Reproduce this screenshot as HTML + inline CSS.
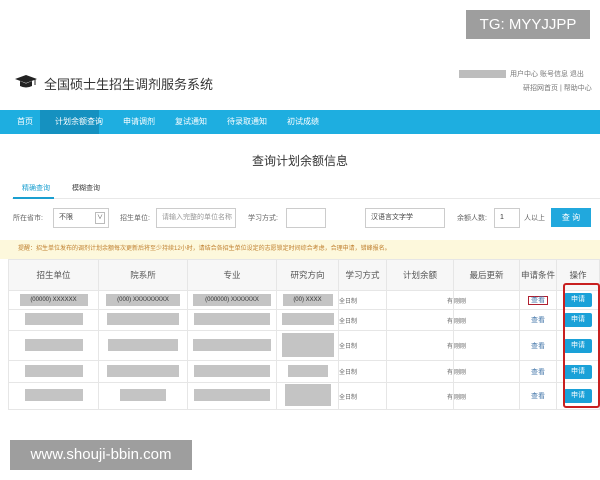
<!DOCTYPE html><html><head><meta charset="utf-8"><style>
*{margin:0;padding:0;box-sizing:border-box}
body{width:600px;height:480px;background:#fff;position:relative;overflow:hidden;font-family:"Liberation Sans","Noto Sans CJK SC",sans-serif;color:#555}
.a{position:absolute}
.g{position:absolute;background:#bdbdbd}
.nav span{position:absolute;top:0;height:24px;line-height:24px;color:#fff;font-size:8px}
.f{font-size:7px;color:#666;position:absolute}
.inp{position:absolute;border:1px solid #ccc;background:#fff;height:20px;font-size:7px;line-height:18px;padding-left:5px;color:#999}
table{position:absolute;left:8px;top:259px;width:592px;border-collapse:collapse;font-size:8px}
td{border:1px solid #e6e6e6;text-align:center;color:#666;position:relative}
th{border:1px solid #e6e6e6;font-weight:normal;color:#555;height:31px;background:#f7f7f7;font-size:8.5px}
.b{display:inline-block;background:#1aa1d8;color:#fff;font-size:7px;width:28px;height:14px;line-height:14px;border-radius:2px}
.k{color:#47a;font-size:7px}
.bar{display:inline-block;background:#c4c4c4;height:12px}
</style></head><body>
<div class="a" style="left:466px;top:10px;width:124px;height:29px;background:#9e9e9e;color:#fff;font-size:15px;line-height:29px;text-align:center">TG: MYYJJPP</div>
<svg class="a" style="left:15px;top:75px" width="22" height="14" viewBox="0 0 22 14"><path d="M0 4 L11 0 L22 4 L11 8 Z" fill="#222"/><path d="M5 6 L5 11 Q11 14 17 11 L17 6 L11 8.5 Z" fill="#222"/><path d="M20 4 L20 10" stroke="#222" stroke-width="1"/></svg>
<div class="a" style="left:44px;top:74px;font-size:13px;color:#333">全国硕士生招生调剂服务系统</div>
<div class="g" style="left:459px;top:70px;width:47px;height:8px"></div>
<div class="a" style="left:510px;top:69px;font-size:7px;color:#777">用户中心 账号信息 退出</div>
<div class="a" style="left:523px;top:83px;font-size:7px;color:#777">研招网首页 | 帮助中心</div>
<div class="a nav" style="left:0;top:110px;width:600px;height:24px;background:#1eaee0">
<div class="a" style="left:40px;top:0;width:59px;height:24px;background:#1591c0"></div>
<span style="left:17px">首页</span><span style="left:55px">计划余额查询</span><span style="left:123px">申请调剂</span><span style="left:175px">复试通知</span><span style="left:227px">待录取通知</span><span style="left:287px">初试成绩</span></div>
<div class="a" style="left:0;top:152px;width:600px;text-align:center;font-size:12px;color:#333">查询计划余额信息</div>
<div class="a" style="left:22px;top:183px;font-size:7px;color:#1a9fd0">精确查询</div>
<div class="a" style="left:72px;top:183px;font-size:7px;color:#444">模糊查询</div>
<div class="a" style="left:12px;top:198px;width:588px;height:1px;background:#e8e8e8"></div>
<div class="a" style="left:13px;top:197px;width:41px;height:2px;background:#1a9fd0"></div>
<div class="f" style="left:13px;top:213px">所在省市:</div>
<div class="inp" style="left:53px;top:208px;width:56px;color:#444">不限<span style="position:absolute;right:3px;top:3px;width:10px;height:12px;border:1px solid #bbb;font-size:6px;line-height:10px;text-align:center">∨</span></div>
<div class="f" style="left:120px;top:213px">招生单位:</div>
<div class="inp" style="left:156px;top:208px;width:80px">请输入完整的单位名称</div>
<div class="f" style="left:248px;top:213px">学习方式:</div>
<div class="inp" style="left:286px;top:208px;width:40px"></div>
<div class="inp" style="left:365px;top:208px;width:80px;color:#444">汉语言文字学</div>
<div class="f" style="left:457px;top:213px">余额人数:</div>
<div class="inp" style="left:494px;top:208px;width:26px;color:#333">1</div>
<div class="f" style="left:524px;top:213px">人以上</div>
<div class="a" style="left:551px;top:208px;width:40px;height:19px;background:#21a8dd;color:#fff;font-size:8px;line-height:19px;text-align:center">查 询</div>
<div class="a" style="left:0;top:240px;width:600px;height:19px;background:#fdf8dc;font-size:6px;line-height:19px;padding-left:18px;color:#c08030">提醒：招生单位发布的调剂计划余额每次更新后将至少持续12小时，请结合各招生单位设定的志愿锁定时间综合考虑，合理申请，错峰报名。</div>
<table>
<tr><th style="width:90px">招生单位</th><th style="width:89px">院系所</th><th style="width:89px">专业</th><th style="width:62px">研究方向</th><th style="width:48px">学习方式</th><th style="width:67px">计划余额</th><th style="width:66px">最后更新</th><th style="width:37px">申请条件</th><th>操作</th></tr>
<tr style="height:19px"><td><span class="bar" style="width:68px;font-size:6px;color:#333;line-height:12px">(00000) XXXXXX</span></td><td><span class="bar" style="width:74px;font-size:6px;color:#333;line-height:12px">(000) XXXXXXXXX</span></td><td><span class="bar" style="width:78px;font-size:6px;color:#333;line-height:12px">(000000) XXXXXXX</span></td><td><span class="bar" style="width:50px;font-size:6px;color:#333;line-height:12px">(00) XXXX</span></td><td style="text-align:left;font-size:6px">全日制</td><td style="text-align:right;font-size:6px">有</td><td style="text-align:left;font-size:6px">刚刚</td><td><span class="k" style="border:1px solid #b02030;padding:0 2px">查看</span></td><td><span class="b">申请</span></td></tr>
<tr style="height:21px"><td><span class="bar" style="width:58px"></span></td><td><span class="bar" style="width:72px"></span></td><td><span class="bar" style="width:76px"></span></td><td><span class="bar" style="width:52px"></span></td><td style="text-align:left;font-size:6px">全日制</td><td style="text-align:right;font-size:6px">有</td><td style="text-align:left;font-size:6px">刚刚</td><td><span class="k">查看</span></td><td><span class="b">申请</span></td></tr>
<tr style="height:30px"><td><span class="bar" style="width:58px"></span></td><td><span class="bar" style="width:70px"></span></td><td><span class="bar" style="width:78px"></span></td><td><span class="bar" style="width:52px;height:24px"></span></td><td style="text-align:left;font-size:6px">全日制</td><td style="text-align:right;font-size:6px">有</td><td style="text-align:left;font-size:6px">刚刚</td><td><span class="k">查看</span></td><td><span class="b">申请</span></td></tr>
<tr style="height:22px"><td><span class="bar" style="width:58px"></span></td><td><span class="bar" style="width:72px"></span></td><td><span class="bar" style="width:76px"></span></td><td><span class="bar" style="width:40px"></span></td><td style="text-align:left;font-size:6px">全日制</td><td style="text-align:right;font-size:6px">有</td><td style="text-align:left;font-size:6px">刚刚</td><td><span class="k">查看</span></td><td><span class="b">申请</span></td></tr>
<tr style="height:27px"><td><span class="bar" style="width:58px"></span></td><td><span class="bar" style="width:46px"></span></td><td><span class="bar" style="width:76px"></span></td><td><span class="bar" style="width:46px;height:22px"></span></td><td style="text-align:left;font-size:6px">全日制</td><td style="text-align:right;font-size:6px">有</td><td style="text-align:left;font-size:6px">刚刚</td><td><span class="k">查看</span></td><td><span class="b">申请</span></td></tr>
</table>
<div class="a" style="left:563px;top:283px;width:37px;height:125px;border:2px solid #c82020;border-radius:3px"></div>
<div class="a" style="left:10px;top:440px;width:182px;height:30px;background:#9e9e9e;color:#fff;font-size:15px;line-height:30px;text-align:center">www.shouji-bbin.com</div>
</body></html>
